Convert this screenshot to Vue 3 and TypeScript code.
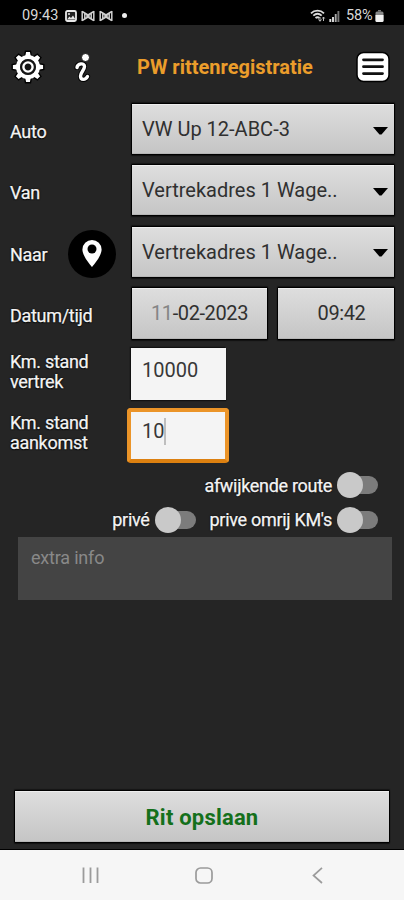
<script setup lang="ts">
import { ref } from 'vue'

interface Choice {
  label: string
  value: string
  pin: boolean
}

const choices: Choice[] = [
  { label: 'Auto', value: 'VW Up 12-ABC-3', pin: false },
  { label: 'Van', value: 'Vertrekadres 1 Wage..', pin: false },
  { label: 'Naar', value: 'Vertrekadres 1 Wage..', pin: true },
]

const teeth: number[] = [0, 45, 90, 135, 180, 225, 270, 315]
const departure = ref('10000')
const arrival = ref('10')
const detour = ref(false)
const personal = ref(false)
const personalDetour = ref(false)
</script>

<template>
  <div class="phone">
    <div class="status">
      <span class="clock">09:43</span>
      <svg class="s-img" width="12" height="12" viewBox="0 0 12 12">
        <rect x="1" y="1" width="10" height="10" rx="1.5" fill="#222" stroke="#e8e8e8" stroke-width="1.8" />
        <path d="M2 9.5 4.5 6.5 6 8 8 5.5 10.5 9.5Z" fill="#e8e8e8" />
        <circle cx="4" cy="4" r="1" fill="#e8e8e8" />
      </svg>
      <svg v-for="n in 2" :key="n" class="s-bow" width="14" height="12" viewBox="0 0 14 12">
        <path d="M1.2 1V11M1.2 1.5 7 5 12.8 1.5M1.2 10.5 7 7 12.8 10.5M12.8 1V11M3.8 3.5V8.500M10.2 3.500V8.500M6 4.500V7.500M8 4.500V7.500" fill="none" stroke="#cfcfcf" stroke-width="1.5" />
      </svg>
      <span class="dot"></span>
      <span class="grow"></span>
      <svg class="s-wifi" width="16" height="14" viewBox="0 0 16 14">
        <path d="M1 4.3C4.5.8 10.5.8 14 4.3M3.3 6.6C6 4.2 9 4.2 11.7 6.6M5.5 9C7 7.8 8 7.8 9.5 9" fill="none" stroke="#dcdcdc" stroke-width="1.8" />
        <path d="M10 8v4M8.500 10.500 10 12.300 11.500 10.500M13.500 12V8M12.300 9.500 13.500 8 14.700 9.500" fill="none" stroke="#bdbdbd" stroke-width="1" />
      </svg>
      <svg class="s-signal" width="11" height="12" viewBox="0 0 11 12">
        <path d="M1.3 12V9M4 12V7" stroke="#ddd" stroke-width="1.9" />
        <path d="M6.7 12V4" stroke="#aaa" stroke-width="1.9" />
        <path d="M9.4 12V1" stroke="#777" stroke-width="1.9" />
      </svg>
      <span class="percent">58%</span>
      <svg class="s-batt" width="9" height="12" viewBox="0 0 9 12">
        <path d="M3 0h3v1.500H3Z" fill="#777" />
        <rect x=".5" y="1.500" width="8" height="10.500" rx="1.500" fill="#888" />
        <path d="M.5 5h8v5.500a1.500 1.500 0 0 1-1.500 1.500H2A1.500 1.500 0 0 1 .5 10.500Z" fill="#f1f1f1" />
      </svg>
    </div>

    <header class="header">
      <svg class="gear" width="36" height="36" viewBox="-18 -18 36 36">
        <g fill="#fff" stroke="#000" stroke-width="1.4">
          <path v-for="a in teeth" :key="a" d="M-3.8-9 -2.5-15.800H2.500L3.800-9Z" :transform="`rotate(${a})`" />
        </g>
        <circle r="10" fill="none" stroke="#fff" stroke-width="4" />
        <circle r="7.800" fill="#161616" />
        <circle r="4.600" fill="none" stroke="#fff" stroke-width="2.400" />
      </svg>
      <svg class="info" width="20" height="32" viewBox="0 0 20 32">
        <g stroke-linecap="round" stroke-linejoin="round" fill="none">
          <path d="M4 15.500C4.500 11.500 11.500 10.300 11.500 14.500C11.500 18 7.500 20.500 7.500 24C7.500 28.600 12.500 28.200 14.500 24.500" stroke="#000" stroke-width="5.200" />
          <path d="M4 15.500C4.500 11.500 11.500 10.300 11.500 14.500C11.500 18 7.500 20.500 7.500 24C7.500 28.600 12.500 28.200 14.500 24.500" stroke="#fff" stroke-width="3.400" />
        </g>
        <circle cx="12.500" cy="5.500" r="4" fill="#fff" stroke="#000" stroke-width=".8" />
      </svg>
      <h1 class="title">PW rittenregistratie</h1>
      <svg class="menu" width="34" height="32" viewBox="0 0 34 32">
        <rect x="1" y="1.500" width="32" height="29" rx="6.500" fill="#fff" stroke="#000" stroke-width="1.500" />
        <path d="M7.500 8.800H26.500M7.500 15.700H26.500M7.500 22.600H26.500" stroke="#111" stroke-width="2.800" stroke-linecap="round" />
      </svg>
    </header>

    <main class="form">
      <div v-for="c in choices" :key="c.label" class="row">
        <div class="label">
          <span>{{ c.label }}</span>
          <span v-if="c.pin" class="pin">
            <svg width="20" height="27" viewBox="0 0 20 27">
              <path d="M10 0A9.600 9.600 0 0 0 .4 9.600C.4 16.500 10 27 10 27S19.600 16.500 19.600 9.600A9.600 9.600 0 0 0 10 0Z" fill="#fff" />
              <circle cx="10" cy="9" r="4.500" fill="#000" />
            </svg>
          </span>
        </div>
        <button class="box select">
          <span>{{ c.value }}</span>
          <svg width="15" height="8" viewBox="0 0 15 8"><path d="M0 0H15L8.500 7.500H6.500Z" fill="#000" /></svg>
        </button>
      </div>

      <div class="row date-row">
        <div class="label">Datum/tijd</div>
        <button class="box date"><span><i>11</i>-02-2023</span></button>
        <button class="box time">09:42</button>
      </div>

      <div class="row km">
        <div class="label two">Km. stand<br />vertrek</div>
        <div class="field">{{ departure }}</div>
      </div>
      <div class="row km second">
        <div class="label two">Km. stand<br />aankomst</div>
        <div class="field focused">{{ arrival }}<span class="caret"></span></div>
      </div>

      <div class="switches">
        <div class="line">
          <span>afwijkende route</span>
          <span class="switch" :class="{ on: detour }"></span>
        </div>
        <div class="line">
          <span>privé</span>
          <span class="switch" :class="{ on: personal }"></span>
          <span class="omrij">prive omrij KM's</span>
          <span class="switch" :class="{ on: personalDetour }"></span>
        </div>
      </div>
      <div class="extra">extra info</div>
    </main>

    <button class="box save">Rit opslaan</button>

    <nav class="nav">
      <svg width="18" height="17" viewBox="0 0 18 17"><path d="M2.500.5V16M9.500.5V16M16.500.5V16" stroke="#9b9b9b" stroke-width="1.800" /></svg>
      <svg width="18" height="17" viewBox="0 0 18 17"><rect x="1" y="1" width="16" height="15" rx="4.500" fill="none" stroke="#9b9b9b" stroke-width="1.700" /></svg>
      <svg width="18" height="17" viewBox="0 0 18 17"><path d="M13 .8 4.500 8.500 13 16" fill="none" stroke="#9b9b9b" stroke-width="1.700" /></svg>
    </nav>
  </div>
</template>

<style>
body {
  background: #252525;
}
</style>

<style scoped>
.phone {
  box-sizing: border-box;
  width: 404px;
  height: 900px;
  display: flex;
  flex-direction: column;
  overflow: hidden;
  background: #252525;
  color: #f4f4f4;
  font-family: Roboto, "Liberation Sans", sans-serif;
}
.phone * {
  box-sizing: border-box;
}
svg {
  display: block;
  flex: none;
}
.status {
  height: 25px;
  flex: none;
  display: flex;
  align-items: center;
  padding: 6px 20px 0 22px;
  background: #000;
  color: #d8d8d8;
}
.clock {
  width: 43px;
  font-size: 14.5px;
  letter-spacing: 0.1px;
}
.s-bow {
  margin-left: 4px;
}
.dot {
  width: 5px;
  height: 5px;
  margin-left: 9px;
  border-radius: 50%;
  background: #eee;
}
.grow {
  flex: 1;
}
.s-signal {
  margin: 0 6px 0 3px;
}
.percent {
  width: 28px;
  font-size: 14.5px;
  letter-spacing: -0.1px;
}
.s-batt {
  margin-left: 1px;
}
.header {
  height: 78px;
  flex: none;
  display: flex;
  align-items: flex-start;
  padding: 24px 14px 0 10px;
}
.header .info {
  margin: 3px 0 0 27px;
}
.header .menu {
  margin: 2px 0 0 auto;
}
.title {
  margin: 5px 0 0 44px;
  color: #eb9d2b;
  font-size: 20px;
  font-weight: 700;
  line-height: 26px;
  white-space: nowrap;
}
.form {
  flex: 1;
  padding: 0 9px 0 10px;
}
.row {
  display: flex;
  height: 52px;
  margin-bottom: 9.3px;
}
.label {
  width: 121px;
  flex: none;
  display: flex;
  align-items: center;
  padding-top: 6px;
  font-size: 18px;
  letter-spacing: -0.3px;
  line-height: 20px;
  text-shadow: 0 0 2px #000, 0 1px 1px #000;
  -webkit-text-stroke: 0.25px #f4f4f4;
}
.pin {
  display: flex;
  justify-content: center;
  width: 48px;
  height: 48px;
  margin-left: 21px;
  margin-top: -1px;
  padding-top: 10px;
  border-radius: 50%;
  background: #000;
}
.box {
  display: flex;
  align-items: center;
  border: 1px solid #000;
  border-radius: 1px;
  background: linear-gradient(#dedede, #c5c5c5);
  box-shadow: inset 0 1px #eee, inset 0 -1px #b5b5b5, 0 1px 1px #111, 0 -1px 1px #161616;
  color: #303030;
  font-family: inherit;
  font-size: 20px;
  white-space: nowrap;
}
.select {
  flex: 1;
  justify-content: space-between;
  padding: 0 6px 0 10px;
}
.select svg {
  margin-top: 3px;
}
.date-row {
  height: 53px;
  margin-bottom: 8px;
}
.date {
  width: 137px;
  justify-content: center;
  letter-spacing: -0.4px;
}
.date i {
  color: #858585;
  font-style: normal;
}
.time {
  flex: 1;
  margin-left: 8.600px;
  padding: 0 0 0 40px;
  letter-spacing: -0.4px;
}
.km {
  height: 52px;
  margin-bottom: 8px;
}
.label.two {
  display: block;
  padding-top: 4px;
}
.field {
  width: 95px;
  height: 52px;
  padding: 10px 0 0 11px;
  background: #f4f4f4;
  box-shadow: -1px -1px 1px #111, 0 1px 1px #111;
  color: #383838;
  font-size: 20px;
  line-height: 24px;
}
.field.focused {
  width: 102px;
  height: 55px;
  margin-left: -4px;
  padding: 7px 0 0 11px;
  border: 4px solid #eb9428;
  border-bottom-color: #dc8010;
  border-radius: 4px;
  display: flex;
  box-shadow: none;
}
.second .label {
  padding-top: 5px;
}
.caret {
  width: 2px;
  height: 27px;
  margin-top: -1px;
  background: #bebebe;
}
.line {
  height: 34.500px;
  display: flex;
  align-items: center;
  justify-content: flex-end;
  padding-right: 17px;
  font-size: 18px;
  letter-spacing: -0.3px;
  text-shadow: 0 0 2px #000;
  -webkit-text-stroke: 0.25px #f4f4f4;
}
.switch {
  position: relative;
  width: 36px;
  height: 18px;
  margin-left: 10px;
  border-radius: 9px;
  background: #7c7c7c;
}
.switch::before {
  content: "";
  position: absolute;
  left: -5px;
  top: -4px;
  width: 26px;
  height: 26px;
  border-radius: 50%;
  background: #c9c9c9;
}
.switch.on::before {
  left: 15px;
}
.omrij {
  margin-left: 14px;
}
.extra {
  height: 63px;
  margin: 0 3px 0 8px;
  padding: 9px 13px;
  background: #444;
  color: #898989;
  font-size: 18px;
  letter-spacing: -0.2px;
  line-height: 24px;
}
.save {
  height: 53px;
  flex: none;
  margin: 0 14px 7px;
  padding: 2px 0 0;
  justify-content: center;
  color: #14701b;
  font-size: 22px;
  font-weight: 700;
  letter-spacing: 0.2px;
}
.nav {
  height: 50px;
  flex: none;
  display: flex;
  justify-content: space-between;
  padding: 17px 77px 0 81px;
  background: #f6f6f6;
  box-shadow: 0 -1px #000;
}
</style>
